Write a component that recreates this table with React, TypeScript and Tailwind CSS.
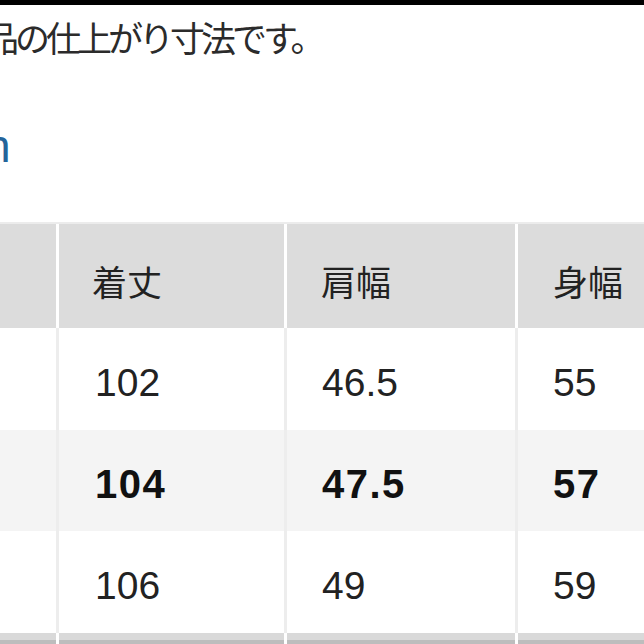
import React from 'react';

interface SizeRow {
  length: string;
  shoulder: string;
  body: string;
  bold?: boolean;
  shaded?: boolean;
  height: string;
}

const rows: SizeRow[] = [
  { length: '102', shoulder: '46.5', body: '55', height: 'h-[102px]' },
  { length: '104', shoulder: '47.5', body: '57', bold: true, shaded: true, height: 'h-[101px]' },
  { length: '106', shoulder: '49', body: '59', height: 'h-[102px]' },
];

const jp = { fontFamily: '"Noto Sans CJK JP", "Noto Sans", sans-serif' };
const num = { fontFamily: '"Liberation Sans", Arial, sans-serif' };

function HeaderRow() {
  return (
    <div className="flex h-[104px] gap-[3px] bg-white">
      <div className="w-[56px] shrink-0 bg-[#dcdcdc]" />
      <div className="flex w-[225px] shrink-0 items-center bg-[#dcdcdc] pl-[33px] pt-[8px]">
        <span className="text-[35px] leading-none text-[#222]" style={jp}>着丈</span>
      </div>
      <div className="flex w-[228px] shrink-0 items-center bg-[#dcdcdc] pl-[34px] pt-[8px]">
        <span className="text-[35px] leading-none text-[#222]" style={jp}>肩幅</span>
      </div>
      <div className="flex flex-1 items-center bg-[#dcdcdc] pl-[35px] pt-[8px]">
        <span className="text-[35px] leading-none text-[#222]" style={jp}>身幅</span>
      </div>
    </div>
  );
}

function BodyRow({ row }: { row: SizeRow }) {
  const bg = row.shaded ? 'bg-[#f4f4f4]' : 'bg-white';
  const text = row.bold
    ? 'text-[40px] font-bold tracking-[1.5px] text-[#111]'
    : 'text-[39px] font-normal text-[#222]';
  return (
    <div className={`flex ${row.height} gap-[3px] bg-[#ededed]`}>
      <div className={`w-[56px] shrink-0 ${bg}`} />
      <div className={`flex w-[225px] shrink-0 items-center pl-[36px] pt-[6px] ${bg}`}>
        <span className={`leading-none ${text}`} style={num}>{row.length}</span>
      </div>
      <div className={`flex w-[228px] shrink-0 items-center pl-[35px] pt-[6px] ${bg}`}>
        <span className={`leading-none ${text}`} style={num}>{row.shoulder}</span>
      </div>
      <div className={`flex flex-1 items-center pl-[35px] pt-[6px] ${bg}`}>
        <span className={`leading-none ${text}`} style={num}>{row.body}</span>
      </div>
    </div>
  );
}

export default function App() {
  return (
    <div className="h-[644px] w-[644px] overflow-hidden bg-white">
      <div className="h-[5px] bg-black" />

      <div className="h-[66px] overflow-hidden pt-[11px]">
        <p
          className="ml-[-16px] whitespace-nowrap text-[35px] leading-[42px] tracking-[-4px] text-[#2b2b2b]"
          style={jp}
        >
          品の仕上がり寸法です。
        </p>
      </div>

      <div className="h-[151px] overflow-hidden pt-[52px]">
        <span
          className="ml-[-15px] block text-[46px] leading-[46px] text-[#24649a]"
          style={num}
        >
          n
        </span>
      </div>

      <div className="h-[2px] bg-[#ececec]" />
      <HeaderRow />
      {rows.map((row) => (
        <BodyRow key={row.length} row={row} />
      ))}
      <div className="flex h-[11px] gap-[3px] bg-white">
        <div className="w-[56px] shrink-0 border-b-[4px] border-[#bdbdbd] bg-[#d9d9d9]" />
        <div className="w-[225px] shrink-0 border-b-[4px] border-[#bdbdbd] bg-[#d9d9d9]" />
        <div className="w-[228px] shrink-0 border-b-[4px] border-[#bdbdbd] bg-[#d9d9d9]" />
        <div className="flex-1 border-b-[4px] border-[#bdbdbd] bg-[#d9d9d9]" />
      </div>
    </div>
  );
}
